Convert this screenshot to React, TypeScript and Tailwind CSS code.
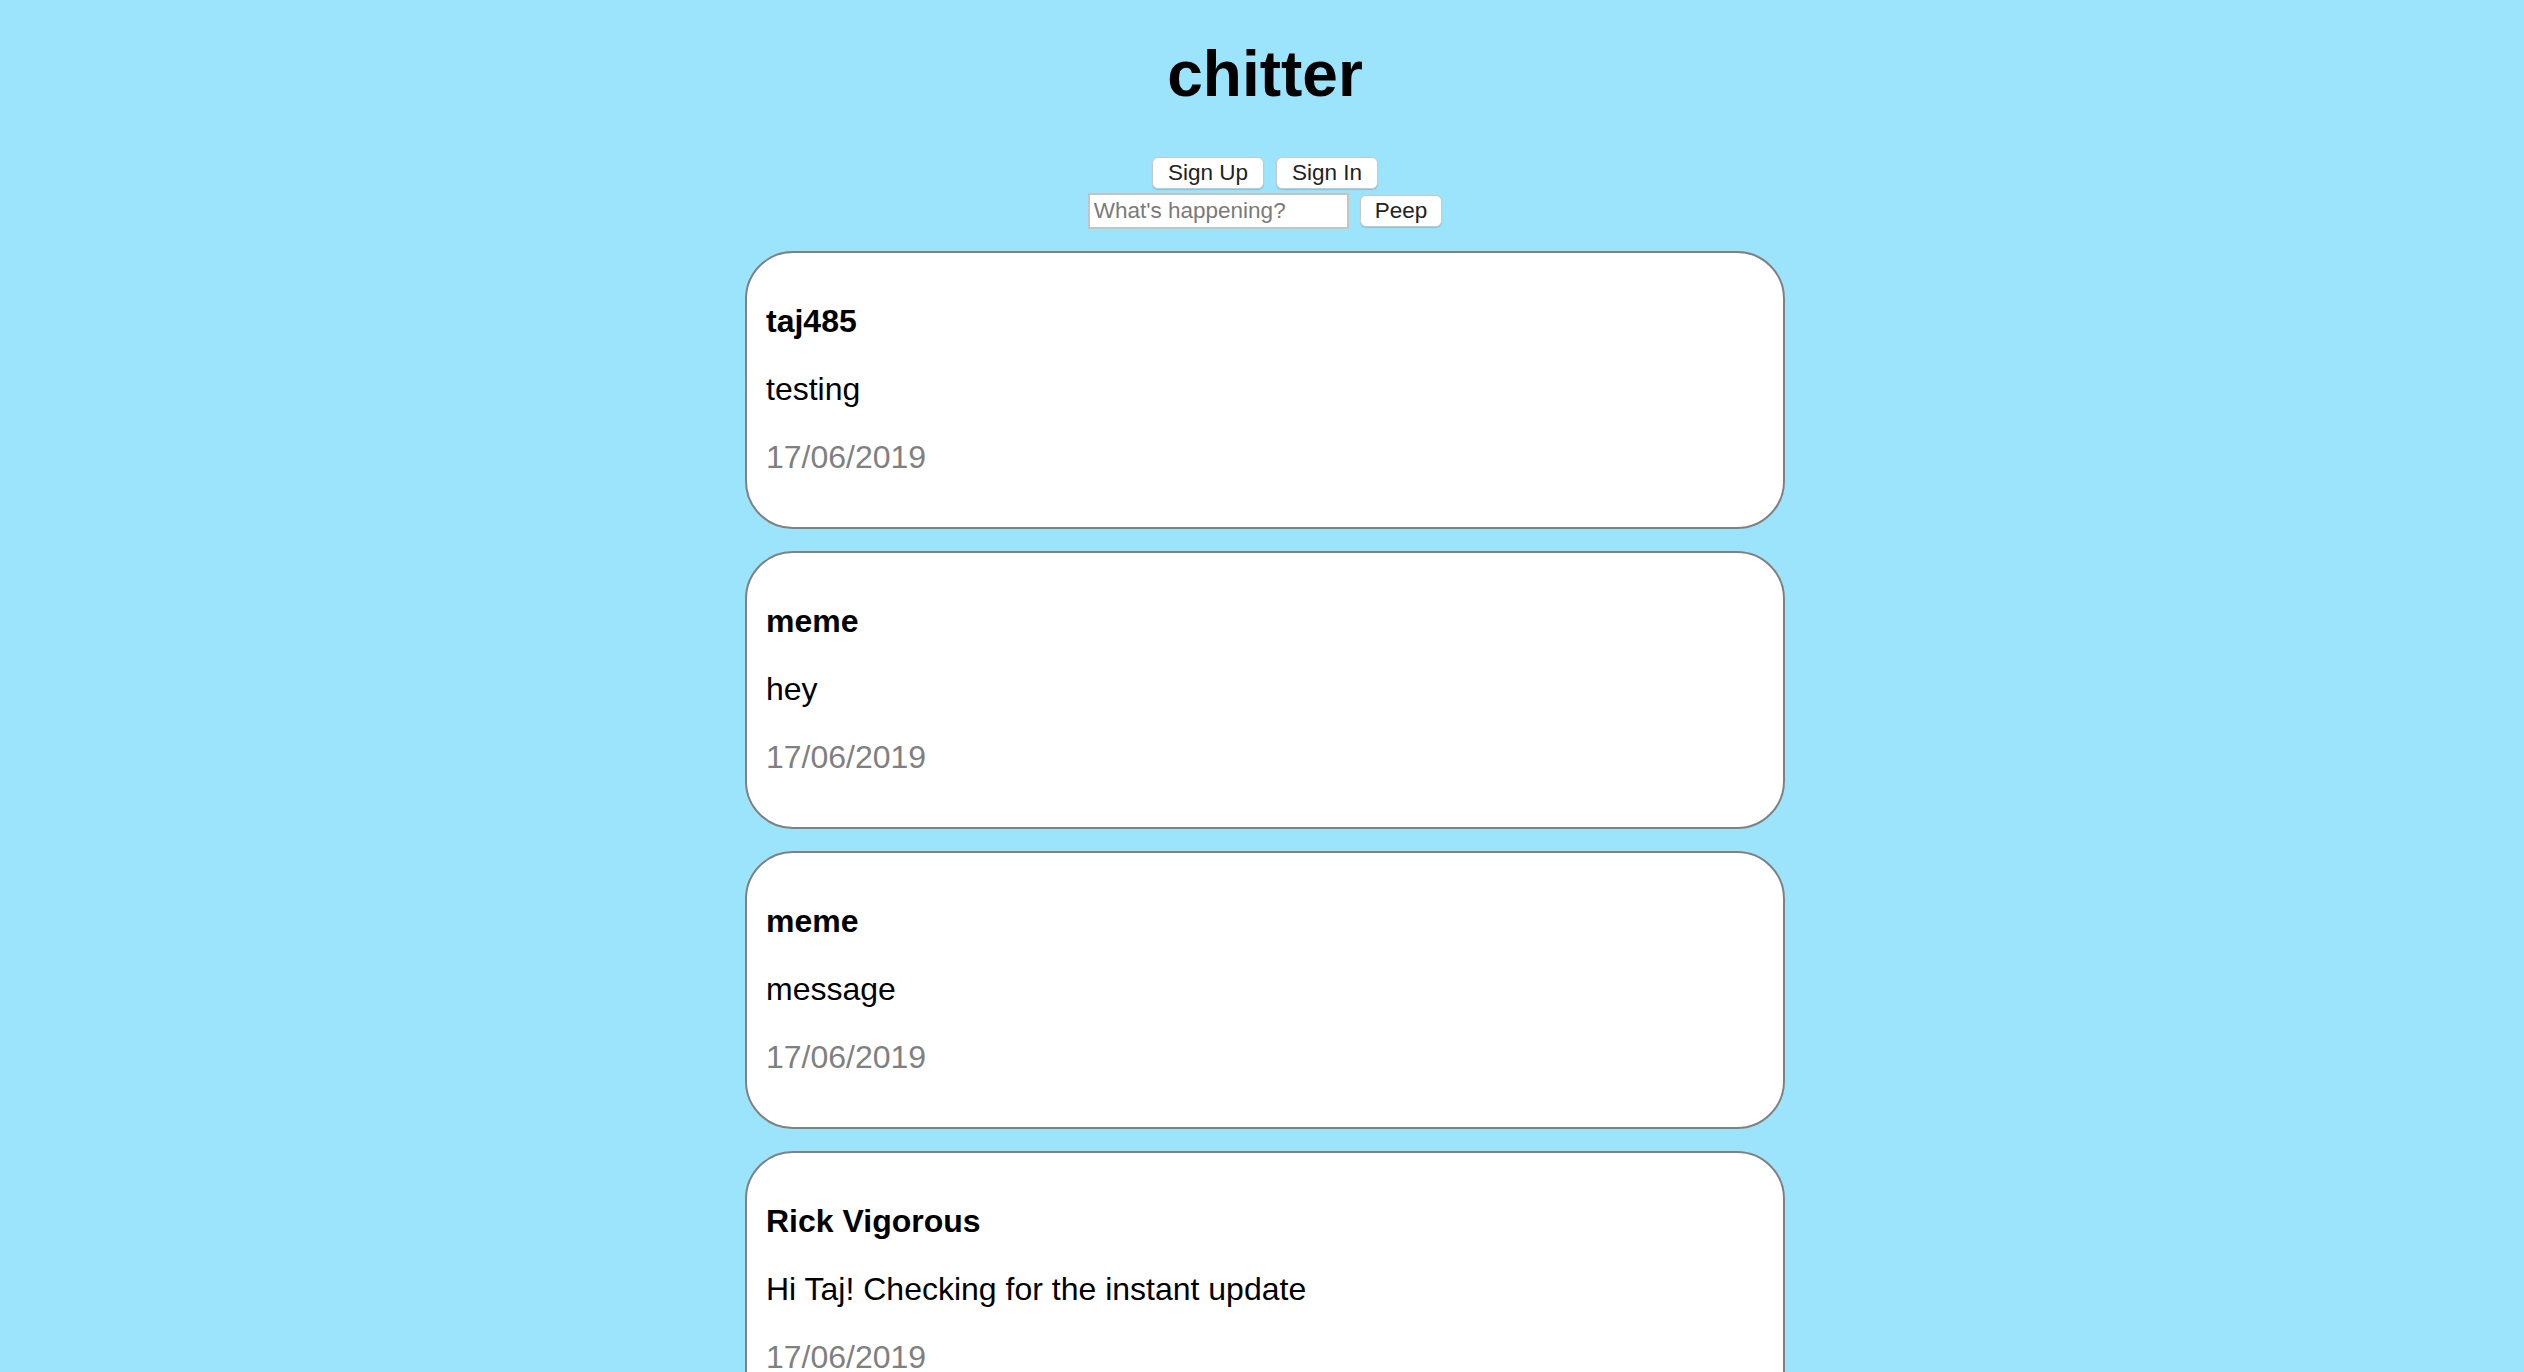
import React from "react";

const peeps = [
  { user: "taj485", text: "testing", date: "17/06/2019" },
  { user: "meme", text: "hey", date: "17/06/2019" },
  { user: "meme", text: "message", date: "17/06/2019" },
  { user: "Rick Vigorous", text: "Hi Taj! Checking for the instant update", date: "17/06/2019" },
];

const font = { fontFamily: '"Liberation Sans", Arial, Helvetica, sans-serif' };

export default function App() {
  return (
    <div
      className="min-h-screen bg-[#9ce3fc] pl-[6px] pb-[40px] flex flex-col items-center"
      style={font}
    >
      <h1 className="mt-[37px] text-[64px] leading-[74px] font-bold text-black">chitter</h1>

      <div className="mt-[46px] flex items-center gap-[12px]">
        <button className="h-[32px] px-[15px] bg-white border border-[#c9c9c9] rounded-[6px] shadow-[0_1px_1px_rgba(0,0,0,0.15)] text-[22.5px] leading-none text-[#222]">
          Sign Up
        </button>
        <button className="h-[32px] px-[15px] bg-white border border-[#c9c9c9] rounded-[6px] shadow-[0_1px_1px_rgba(0,0,0,0.15)] text-[22.5px] leading-none text-[#222]">
          Sign In
        </button>
      </div>

      <div className="mt-[4px] flex items-center gap-[11px]">
        <input
          placeholder="What's happening?"
          className="w-[261px] h-[36px] bg-white border-2 border-[#c4c4c4] px-[4px] text-[22.5px] text-[#222] placeholder:text-[#7a7a7a] outline-none"
        />
        <button className="h-[32px] px-[14px] bg-white border border-[#c9c9c9] rounded-[6px] shadow-[0_1px_1px_rgba(0,0,0,0.15)] text-[22.5px] leading-none text-[#222]">
          Peep
        </button>
      </div>

      <div className="mt-[22px] flex flex-col gap-[22px]">
        {peeps.map((p, i) => (
          <div
            key={i}
            className="w-[1040px] bg-white border-2 border-[#808080] rounded-[48px] pl-[19px] pr-[19px] pt-[50px] pb-[51px] flex flex-col gap-[31px] text-[32px] leading-[37px]"
          >
            <div className="font-bold text-black">{p.user}</div>
            <div className="text-black">{p.text}</div>
            <div className="text-[#808080]">{p.date}</div>
          </div>
        ))}
      </div>
    </div>
  );
}
